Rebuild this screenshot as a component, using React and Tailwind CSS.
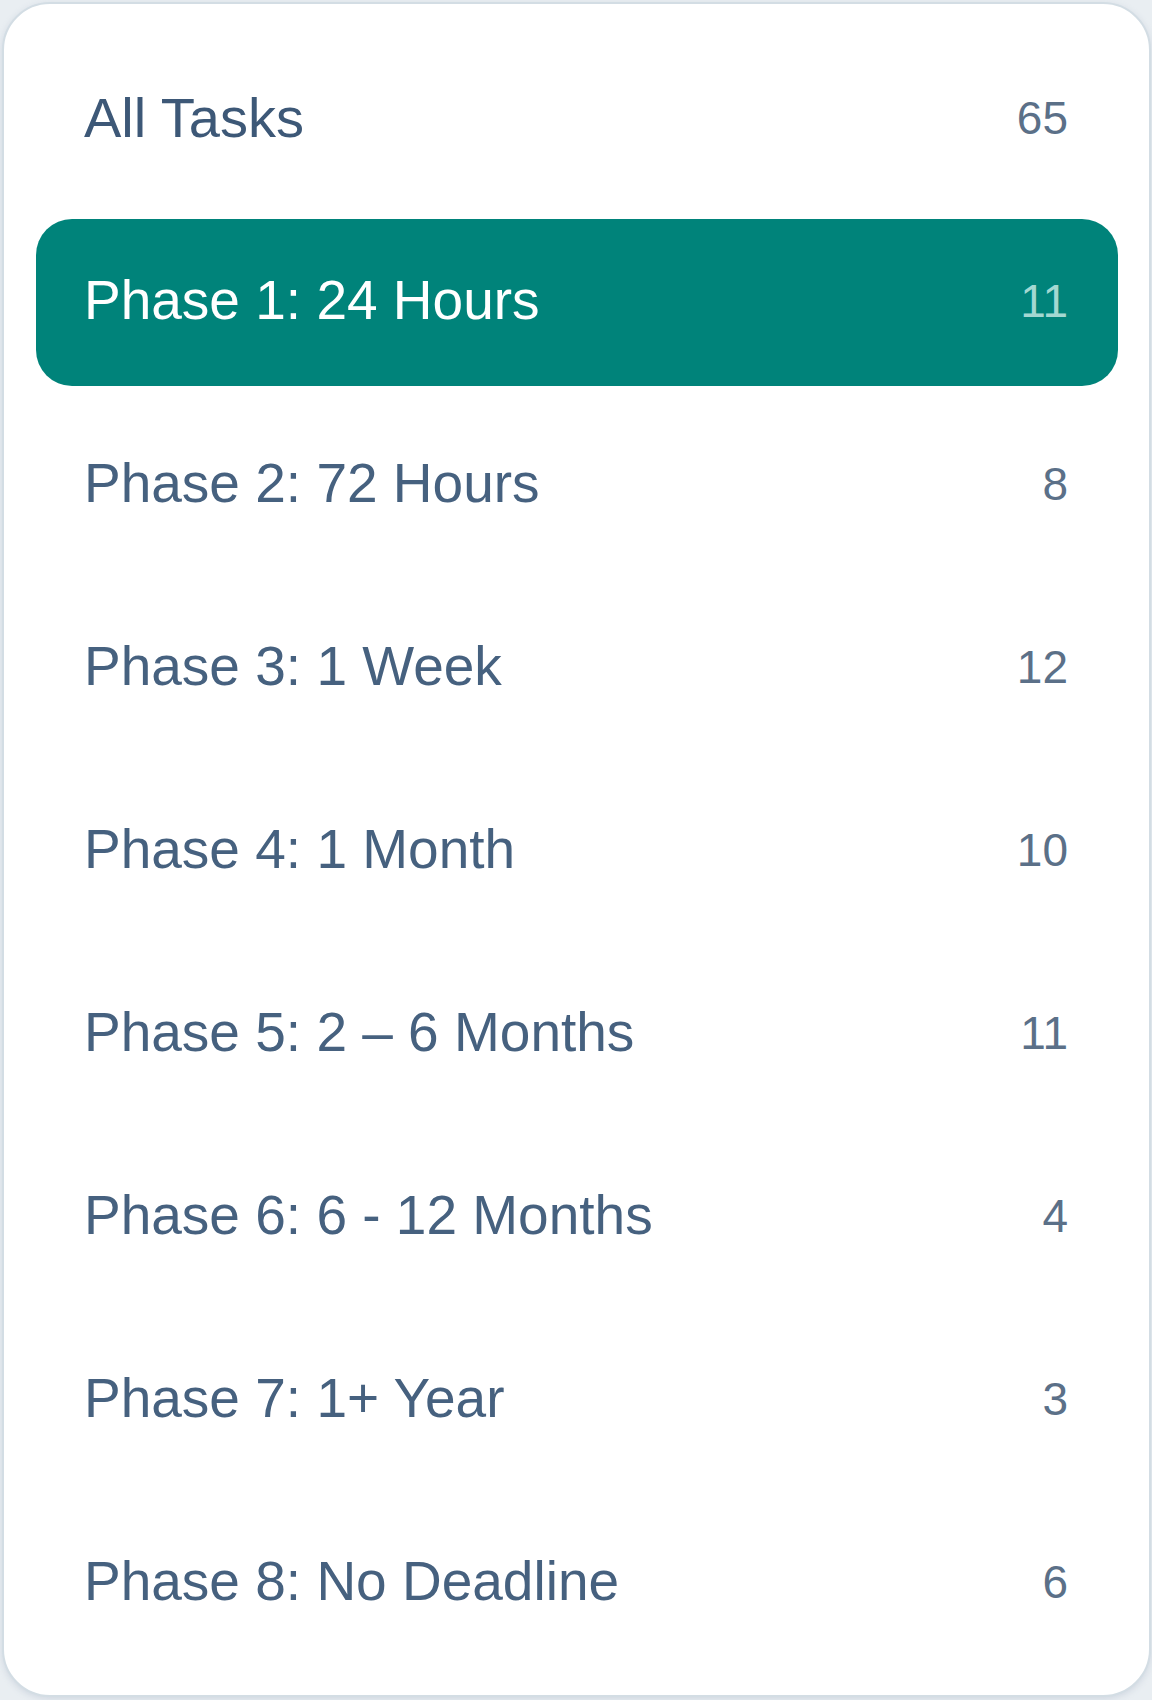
import React from "react";

const items = [
  { label: "All Tasks", count: 65 },
  { label: "Phase 1: 24 Hours", count: 11, active: true },
  { label: "Phase 2: 72 Hours", count: 8 },
  { label: "Phase 3: 1 Week", count: 12 },
  { label: "Phase 4: 1 Month", count: 10 },
  { label: "Phase 5: 2 \u2013 6 Months", count: 11 },
  { label: "Phase 6: 6 - 12 Months", count: 4 },
  { label: "Phase 7: 1+ Year", count: 3 },
  { label: "Phase 8: No Deadline", count: 6 },
];

export default function App() {
  return (
    <div
      className="w-[1152px] h-[1700px] bg-[#e9eef2] p-[2px]"
      style={{ fontFamily: '"Liberation Sans", Arial, sans-serif' }}
    >
      <div className="w-[1149px] rounded-[48px] border-2 border-[#d3dde4] bg-white pl-[32px] pr-[31px] pt-[32px] pb-[28px] shadow-[0_2px_6px_rgba(148,163,184,0.3)]">
        <div className="flex flex-col gap-[16px]">
          {items.map((it) => (
            <div
              key={it.label}
              className={
                it.active
                  ? "flex h-[167px] items-center justify-between rounded-[36px] bg-[#00837a] pl-[48px] pr-[50px] pb-[4px]"
                  : "flex h-[167px] items-center justify-between rounded-[36px] pl-[48px] pr-[50px] pb-[4px]"
              }
            >
              <span
                className={
                  it.active
                    ? "text-[55px] leading-none text-white"
                    : it.label === "All Tasks"
                    ? "text-[56px] leading-none text-[#3d5877]"
                    : "text-[55px] leading-none text-[#46617f]"
                }
              >
                {it.label}
              </span>
              <span
                className={
                  it.active
                    ? "text-[46px] leading-none text-[#a3d8d2]"
                    : "text-[46px] leading-none text-[#5b7088]"
                }
              >
                {it.count}
              </span>
            </div>
          ))}
        </div>
      </div>
    </div>
  );
}
